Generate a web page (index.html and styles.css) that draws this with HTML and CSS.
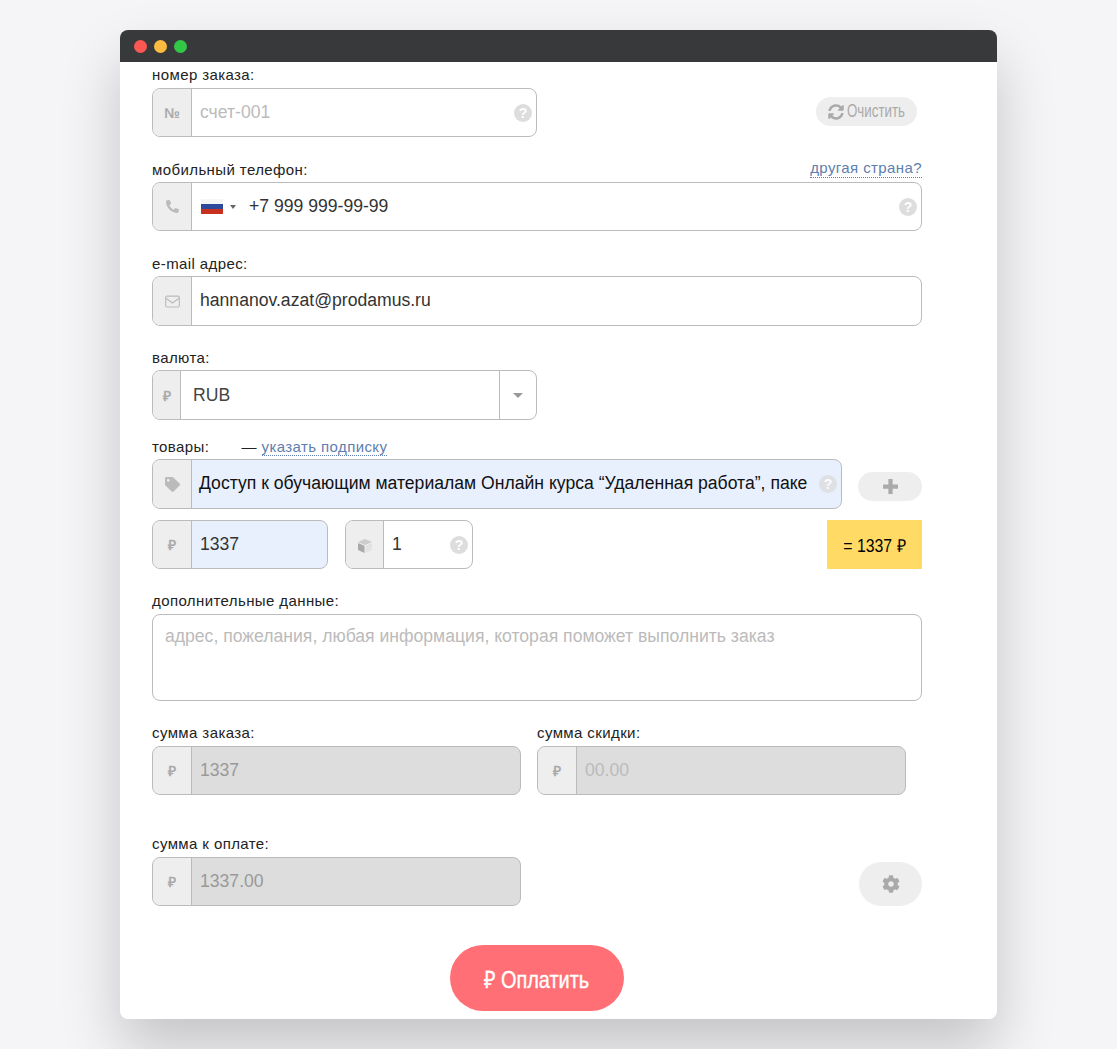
FILE: index.html
```html
<!DOCTYPE html>
<html lang="en">
<head>
    <meta charset="UTF-8">
    <meta name="viewport" content="width=device-width, initial-scale=1.0">
    <title>Payment form</title>
    <link rel="stylesheet" href="styles.css">
</head>
<body>

    <div class="window">
        <!-- Title bar -->
        <div class="titlebar">
            <span class="dot dot-red"></span>
            <span class="dot dot-yellow"></span>
            <span class="dot dot-green"></span>
        </div>

        <form class="form">
            <!-- Order number -->
            <div class="label">номер заказа:</div>
            <div class="row">
                <div class="group w-half">
                    <div class="addon addon-text">№</div>
                    <div class="value placeholder">счет-001</div>
                    <span class="help">?</span>
                </div>
                <button type="button" class="pill pill-clear">
                    <svg class="clear-icon" viewBox="0 0 512 512"><path d="M370.72 133.28C339.458 104.008 298.888 87.962 255.848 88c-77.458.068-144.328 53.178-162.791 126.85-1.344 5.363-6.122 9.15-11.651 9.15H24.103c-7.498 0-13.194-6.807-11.807-14.176C33.933 94.924 134.813 8 256 8c66.448 0 126.791 26.136 171.315 68.685L463.03 40.97C478.149 25.851 504 36.559 504 57.941V192c0 13.255-10.745 24-24 24H345.941c-21.382 0-32.09-25.851-16.971-40.971l41.75-41.749zM32 296h134.059c21.382 0 32.09 25.851 16.971 40.971l-41.75 41.75c31.262 29.273 71.835 45.319 114.876 45.28 77.418-.07 144.315-53.144 162.787-126.849 1.344-5.363 6.122-9.15 11.651-9.15h57.304c7.498 0 13.194 6.807 11.807 14.176C478.067 417.076 377.187 504 256 504c-66.448 0-126.791-26.136-171.315-68.685L48.97 471.03C33.851 486.149 8 475.441 8 454.059V320c0-13.255 10.745-24 24-24z"/></svg>
                    <span class="clear-text">Очистить</span>
                </button>
            </div>

            <!-- Phone -->
            <div class="label label-split label-low gap-25">
                <span>мобильный телефон:</span>
                <a href="#" class="link link-up">другая страна?</a>
            </div>
            <div class="group">
                <div class="addon">
                    <svg class="addon-icon phone-icon" viewBox="0 0 512 512"><path d="M493.4 24.6l-104-24c-11.3-2.6-22.9 3.3-27.5 13.9l-48 112c-4.2 9.8-1.4 21.3 6.9 28l60.6 49.6c-36 76.7-98.9 140.5-177.2 177.2l-49.6-60.6c-6.8-8.3-18.2-11.1-28-6.9l-112 48C3.9 366.5-2 378.1.6 389.4l24 104C27.1 504.2 36.7 512 48 512c256.1 0 464-207.5 464-464 0-11.2-7.7-20.9-18.6-23.4z"/></svg>
                </div>
                <div class="flag"><i class="flag-white"></i><i class="flag-blue"></i><i class="flag-red"></i></div>
                <span class="flag-caret"></span>
                <div class="value phone-value">+7 999 999-99-99</div>
                <span class="help">?</span>
            </div>

            <!-- Email -->
            <div class="label label-low gap-25">e-mail адрес:</div>
            <div class="group tall">
                <div class="addon">
                    <svg class="addon-icon" viewBox="0 0 16 14"><rect x="0.7" y="1.2" width="14.6" height="11.6" rx="1.5" fill="none" stroke="currentColor" stroke-width="1.2"/><path d="M1 3.6l7 5 7-5" fill="none" stroke="currentColor" stroke-width="1.2"/></svg>
                </div>
                <div class="value value-up">hannanov.azat@prodamus.ru</div>
            </div>

            <!-- Currency -->
            <div class="label label-low gap-24">валюта:</div>
            <div class="group tall w-half">
                <div class="addon addon-small addon-text">₽</div>
                <div class="value select-value">RUB</div>
                <div class="select-arrow"><span></span></div>
            </div>

            <!-- Products -->
            <div class="label gap-19 goods-label">
                <span class="goods-title">товары:</span>
                <span>— <a href="#" class="link">указать подписку</a></span>
            </div>
            <div class="row">
                <div class="group tall w-product filled">
                    <div class="addon">
                        <svg class="addon-icon" viewBox="0 0 512 512"><path d="M0 252.118V48C0 21.49 21.49 0 48 0h204.118a48 48 0 0 1 33.941 14.059l211.882 211.882c18.745 18.745 18.745 49.137 0 67.882L293.823 497.941c-18.745 18.745-49.137 18.745-67.882 0L14.059 286.059A48 48 0 0 1 0 252.118zM112 64c-26.51 0-48 21.49-48 48s21.49 48 48 48 48-21.49 48-48-21.49-48-48-48z"/></svg>
                    </div>
                    <div class="value value-up product-value">Доступ к обучающим материалам Онлайн курса “Удаленная работа”, паке</div>
                    <span class="help">?</span>
                </div>
                <button type="button" class="pill pill-add">
                    <svg class="add-icon" viewBox="0 0 16 16"><path d="M6 1h4v5h5v4h-5v5H6v-5H1V6h5z"/></svg>
                </button>
            </div>

            <div class="row price-row">
                <div class="group w-price filled">
                    <div class="addon addon-text">₽</div>
                    <div class="value">1337</div>
                </div>
                <div class="group w-qty">
                    <div class="addon addon-qty">
                        <svg class="cube-icon" viewBox="0 0 16 16"><path d="M8 1l7 3-7 3-7-3z" fill="#ccc"/><path d="M1 5l6.5 2.8V15L1 12z" fill="#aaa"/><path d="M8.5 7.8L15 5v7l-6.5 3z" fill="#e2e2e2"/></svg>
                    </div>
                    <div class="value">1</div>
                    <span class="help">?</span>
                </div>
                <div class="total"><span class="total-text">= 1337 ₽</span></div>
            </div>

            <!-- Extra data -->
            <div class="label gap-25">дополнительные данные:</div>
            <div class="group textarea">
                <div class="placeholder textarea-text">адрес, пожелания, любая информация, которая поможет выполнить заказ</div>
            </div>

            <!-- Sums -->
            <div class="sums gap-25">
                <div>
                    <div class="label">сумма заказа:</div>
                    <div class="group w-sum disabled">
                        <div class="addon addon-text">₽</div>
                        <div class="value">1337</div>
                    </div>
                </div>
                <div>
                    <div class="label">сумма скидки:</div>
                    <div class="group w-sum disabled">
                        <div class="addon addon-text">₽</div>
                        <div class="value faded">00.00</div>
                    </div>
                </div>
            </div>

            <div class="label gap-42">сумма к оплате:</div>
            <div class="row">
                <div class="group w-sum disabled">
                    <div class="addon addon-text">₽</div>
                    <div class="value">1337.00</div>
                </div>
                <button type="button" class="pill pill-settings">
                    <svg class="gear-icon" viewBox="0 0 512 512"><path d="M487.4 315.7l-42.6-24.6c4.3-23.2 4.3-47 0-70.2l42.6-24.6c4.9-2.8 7.1-8.6 5.5-14-11.1-35.6-30-67.8-54.7-94.6-3.8-4.1-10-5.1-14.8-2.3L380.8 110c-17.9-15.4-38.5-27.3-60.8-35.1V25.8c0-5.6-3.9-10.5-9.4-11.7-36.7-8.2-74.3-7.8-109.2 0-5.5 1.2-9.4 6.1-9.4 11.7V75c-22.2 7.9-42.8 19.8-60.8 35.1L88.7 85.5c-4.9-2.8-11-1.9-14.8 2.3-24.7 26.7-43.6 58.9-54.7 94.6-1.7 5.4.6 11.2 5.5 14L67.3 221c-4.3 23.2-4.3 47 0 70.2l-42.6 24.6c-4.9 2.8-7.1 8.6-5.5 14 11.1 35.6 30 67.8 54.7 94.6 3.8 4.1 10 5.1 14.8 2.3l42.6-24.6c17.9 15.4 38.5 27.3 60.8 35.1v49.2c0 5.6 3.9 10.5 9.4 11.7 36.7 8.2 74.3 7.8 109.2 0 5.5-1.2 9.4-6.1 9.4-11.7v-49.2c22.2-7.9 42.8-19.8 60.8-35.1l42.6 24.6c4.9 2.8 11 1.9 14.8-2.3 24.7-26.7 43.6-58.9 54.7-94.6 1.5-5.5-.7-11.3-5.6-14.1zM256 336c-44.1 0-80-35.9-80-80s35.9-80 80-80 80 35.9 80 80-35.9 80-80 80z"/></svg>
                </button>
            </div>

            <div class="pay-wrap">
                <button type="button" class="pay"><span class="pay-text">₽ Оплатить</span></button>
            </div>
        </form>
    </div>

</body>
</html>
```

FILE: styles.css
```css
body {
    font-family: 'Liberation Sans', Arial, sans-serif;
    background-color: #f5f5f8;
    margin: 0;
    padding: 30px 120px;
    color: #222;
}

/* Window */
.window {
    width: 877px;
    height: 989px;
    background-color: white;
    border-radius: 8px;
    box-shadow: 0 30px 60px rgba(0, 0, 0, 0.2);
    overflow: hidden;
}

.titlebar {
    height: 32px;
    background-color: #38393b;
    display: flex;
    align-items: center;
    gap: 7px;
    padding-left: 14px;
}

.dot {
    width: 13px;
    height: 13px;
    border-radius: 50%;
}

.dot-red { background-color: #fc5753; }
.dot-yellow { background-color: #fdbc40; }
.dot-green { background-color: #33c748; }

/* Form */
.form {
    width: 770px;
    padding: 6px 0 0 32px;
}

.row {
    display: flex;
    justify-content: space-between;
    align-items: center;
}

.label {
    height: 20px;
    font-size: 15px;
    line-height: 14px;
    letter-spacing: 0.4px;
    color: #222;
}

.label-low {
    box-sizing: border-box;
    padding-top: 1px;
}

.label-split {
    display: flex;
    justify-content: space-between;
}

.gap-19 { margin-top: 19px; }
.gap-24 { margin-top: 24px; }
.gap-25 { margin-top: 25px; }
.gap-42 { margin-top: 42px; }

.goods-label { padding-top: 1px; height: 19px; }

.goods-title {
    display: inline-block;
    width: 85px;
}

.link {
    color: #5d7eae;
    text-decoration: none;
    border-bottom: 1px dotted #5d7eae;
}

.link-up { margin-top: -2px; height: 16px; }

/* Input groups */
.group {
    box-sizing: border-box;
    height: 49px;
    display: flex;
    align-items: center;
    border: 1px solid #bbb;
    border-radius: 8px;
    overflow: hidden;
    background-color: white;
}

.tall { height: 50px; }
.w-half { width: 385px; }
.w-product { width: 690px; }
.w-price { width: 176px; }
.w-qty { width: 128px; margin-left: 17px; margin-right: auto; }
.w-sum { width: 369px; }

.addon {
    box-sizing: border-box;
    flex: none;
    width: 39px;
    height: 100%;
    display: flex;
    align-items: center;
    justify-content: center;
    background-color: #eee;
    border-right: 1px solid #bbb;
    color: #bbb;
}

.addon-small { width: 28px; }
.addon-qty { width: 38px; }

.addon-text {
    font-size: 14px;
    font-weight: bold;
    color: #aaa;
}

.addon-icon {
    width: 15px;
    height: 15px;
    fill: currentColor;
}

.phone-icon { transform: scaleX(-1); width: 13px; height: 13px; }

.cube-icon {
    width: 16px;
    height: 16px;
    margin-top: 2px;
}

.value {
    flex: 1;
    min-width: 0;
    padding-left: 8px;
    font-size: 17.6px;
    color: #333;
    white-space: nowrap;
    overflow: hidden;
}

.value-up { padding-bottom: 2px; }

.placeholder { color: #bbb; }
.faded { color: #bbb !important; }

.help {
    flex: none;
    width: 18px;
    height: 18px;
    margin: 0 4px 0 4px;
    border-radius: 50%;
    background-color: #ddd;
    color: white;
    font-size: 14px;
    font-weight: bold;
    line-height: 18px;
    text-align: center;
}

.filled { background-color: #e8f0fe; }
.filled .help { opacity: 0.8; }
.product-value { color: #111; padding-left: 7px; }

.disabled { background-color: #ddd; }
.disabled .value { color: #999; }

/* Phone flag */
.flag {
    flex: none;
    display: flex;
    flex-direction: column;
    width: 22px;
    height: 16px;
    margin-left: 9px;
}

.flag i { flex: 1; }
.flag-white { background-color: #f5f5f5; }
.flag-blue { background-color: #2b4a9b; }
.flag-red { background-color: #c8301f; }

.flag-caret {
    flex: none;
    margin-left: 7px;
    border-top: 4px solid #666;
    border-left: 3px solid transparent;
    border-right: 3px solid transparent;
}

.phone-value { padding-left: 13px; }

/* Select */
.select-value { padding-left: 12px; color: #444; }

.select-arrow {
    flex: none;
    box-sizing: border-box;
    width: 37px;
    height: 100%;
    display: flex;
    align-items: center;
    justify-content: center;
    border-left: 1px solid #bbb;
}

.select-arrow span {
    border-top: 5px solid #999;
    border-left: 5px solid transparent;
    border-right: 5px solid transparent;
}

/* Pills */
.pill {
    border: none;
    padding: 0;
    background-color: #eee;
    display: flex;
    align-items: center;
    justify-content: center;
    cursor: pointer;
}

.pill-clear {
    width: 101px;
    height: 29px;
    margin: -2px 5px 0 0;
    justify-content: flex-start;
    padding-left: 12px;
    gap: 3px;
    border-radius: 15px;
    font-family: 'Liberation Sans', sans-serif;
    font-size: 18px;
    color: #aaa;
}

.clear-icon {
    flex: none;
    width: 16px;
    height: 16px;
    fill: #aaa;
}

/* no narrow family installed, so the condensed labels are squeezed by hand */
.clear-text {
    display: inline-block;
    width: 58px;
    white-space: nowrap;
    transform: scaleX(0.74);
    transform-origin: left center;
}

.pill-add {
    width: 64px;
    height: 29px;
    margin-top: 5px;
    border-radius: 15px;
}

.add-icon {
    width: 17px;
    height: 17px;
    fill: #aaa;
}

.pill-settings {
    width: 63px;
    height: 44px;
    margin: 5px 0 0;
    border-radius: 22px;
}

.gear-icon {
    width: 18px;
    height: 18px;
    fill: #aaa;
}

.price-row {
    margin-top: 11px;
}

.total {
    width: 95px;
    height: 49px;
    background-color: #ffdb66;
    display: flex;
    align-items: center;
    justify-content: center;
    font-size: 18px;
    color: #000;
}

.total-text {
    white-space: nowrap;
    transform: scaleX(0.88);
}

.textarea {
    height: 87px;
    align-items: flex-start;
}

.textarea-text {
    padding: 11px 0 0 12px;
    font-size: 17.6px;
    white-space: nowrap;
}

.sums {
    display: flex;
    gap: 16px;
}

/* Pay button */
.pay-wrap {
    display: flex;
    justify-content: center;
    margin-top: 39px;
}

.pay {
    width: 174px;
    height: 66px;
    border: none;
    border-radius: 33px;
    background-color: #ff6f75;
    color: white;
    font-family: 'Liberation Sans', sans-serif;
    font-size: 24px;
    font-weight: normal;
    -webkit-text-stroke: 0.4px white;
    cursor: pointer;
}

.pay-text {
    display: inline-block;
    white-space: nowrap;
    transform: scaleX(0.83);
}
```
